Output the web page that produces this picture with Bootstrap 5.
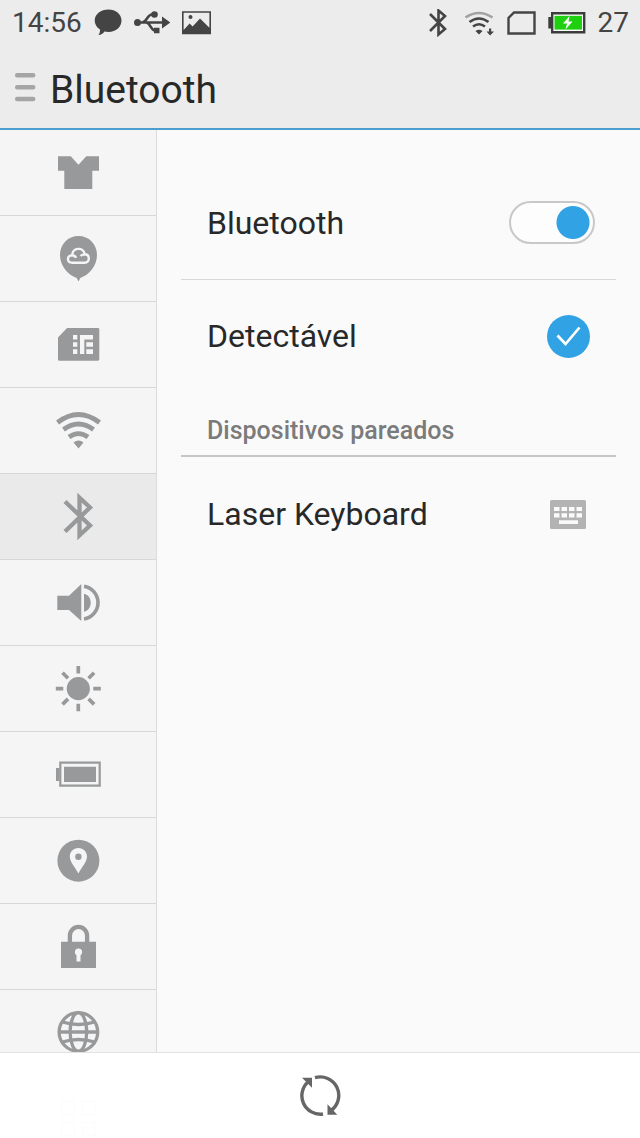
<!DOCTYPE html>
<html lang="pt-BR">
<head>
<meta charset="utf-8">
<meta name="viewport" content="width=device-width, initial-scale=1">
<title>Bluetooth</title>
<link href="https://cdn.jsdelivr.net/npm/bootstrap@5.3.0/dist/css/bootstrap.min.css" rel="stylesheet">
<style>
  body { font-family: Roboto, "Noto Sans", sans-serif; background: #fafafa; color: #282828; }
  svg { display: block; flex: none; }
  .top-area { background: #ececec; border-bottom: 2px solid #4a9fcf; }
  .status-bar { height: 46px; padding: 0 11px 0 12px; font-size: 28px; line-height: 46px; color: #444; }
  .status-group { gap: 12px; }
  .title-bar { height: 82px; padding: 2px 14px 0; gap: 14px; }
  .title-bar h1 { font-size: 39px; line-height: 46px; padding-top: 3px; }
  .side-nav { width: 157px; background: #f5f5f5; border-right: 1px solid #dcdcdc; }
  .side-nav a { height: 86px; border-bottom: 1px solid #d8d8d8; color: #98999a; }
  .side-nav a.active { background: #eaeaea; }
  .settings { padding: 36px 24px 0; }
  .setting-row { height: 114px; padding: 0 21px 0 26px; font-size: 32px; line-height: 40px; }
  .setting-row.short { height: 112px; }
  .ruled { border-bottom: 1px solid #d8d8d8; }
  .section-title { height: 65px; padding: 23px 26px 0; font-size: 25px; line-height: 32px; font-weight: 500; color: #7b7b7b; border-bottom: 2px solid #c6c6c6; }
  .trailing { width: 54px; }
  .toggle { appearance: none; width: 86px; height: 43px; margin: 0; border: 2px solid #c8c8c8; border-radius: 22px;
    background: #fdfdfd radial-gradient(circle at 20px 50%, #c8c8c8 16px, transparent 17px); }
  .toggle:checked { background-image: radial-gradient(circle at 62px 50%, #31a3e4 16px, transparent 17px); }
  .round-check { appearance: none; width: 43px; height: 43px; margin: 0; border: 2px solid #c8c8c8; border-radius: 50%; flex: none; }
  .round-check:checked { border: 0; background: #31a3e4 url("data:image/svg+xml,%3Csvg xmlns='http://www.w3.org/2000/svg' viewBox='0 0 43 43'%3E%3Cpath d='M10.500 20.500l8 8.500L32.500 12.500' fill='none' stroke='white' stroke-width='2.700'/%3E%3C/svg%3E") center / 43px; }
  .bottom-bar { height: 86px; background: rgba(255,255,255,.98); border-top: 1px solid #e2e2e2; }
</style>
</head>
<body>
<div class="vh-100 d-flex flex-column overflow-hidden">
  <header class="top-area flex-shrink-0">
    <div class="status-bar d-flex justify-content-between">
      <div class="status-group d-flex align-items-center">
        <span>14:56</span>
        <svg width="28" height="28" viewBox="0 0 28 28" fill="currentColor" aria-hidden="true"><path d="M14.500.5C21.500.5 27.500 5 27.500 11.500S22 23 14.500 23c-1.500 0-3-.2-4-.5C9 24.500 7 26 4.500 26c1-1.500 1.700-3.500 1.500-5.500C2.500 18.500.7 15 .7 11.500.7 5 7 .5 14.500.5z"/></svg>
        <svg width="36" height="28" viewBox="0 0 36 28" fill="none" stroke="currentColor" stroke-width="2.500" aria-hidden="true"><path d="M3 13.500h27M8 13.500c5 0 5-8 10-8h3M12 13.500c4 0 5 8 9 8h2"/><g fill="currentColor" stroke="none"><circle cx="3.500" cy="13.500" r="3.500"/><circle cx="20.500" cy="5.500" r="3.300"/><path d="M20 18.700h5.500v5.500H20zM28 7.500l8.500 6-8.500 6z"/></g></svg>
        <svg width="29" height="28" viewBox="0 0 29 28" fill="currentColor" aria-hidden="true"><path fill-rule="evenodd" d="M0 2.200h29v23H0zM1.600 3.800V21l6-6.500 3 3L18 9.500l9.400 9.200V3.800z"/><circle cx="8.500" cy="8" r="2"/></svg>
      </div>
      <div class="status-group d-flex align-items-center">
        <svg width="24" height="28" viewBox="0 0 24 28" fill="none" stroke="currentColor" stroke-width="2.600" aria-hidden="true"><path d="M1 5l15 15-6.500 5.500v-24L16 7 1 22"/></svg>
        <svg width="30" height="28" viewBox="0 0 30 28" fill="none" stroke="currentColor" stroke-width="2.600" aria-hidden="true"><path stroke="#a2a2a2" d="M.5 8.500Q14 -.500 27.500 8.500"/><path d="M4.500 13Q14 6 23.500 13M8 17.500q6-4.500 12 0"/><path fill="currentColor" stroke="none" d="M10.500 22q3.500-2.500 7 0L14 25.500zM24 19.500h2.200v3H29L25.100 26.500 21.500 22.500H24z"/></svg>
        <svg width="29" height="28" viewBox="0 0 29 28" fill="none" stroke="currentColor" stroke-width="2.400" aria-hidden="true"><path d="M7 3.500h20.500v21h-26V9z"/></svg>
        <svg width="38" height="28" viewBox="0 0 38 28" aria-hidden="true"><path d="M4.200 4.200h32v19h-32z" fill="#fff" stroke="#3c3c3c" stroke-width="2.400"/><path fill="#3c3c3c" d="M.3 8H4v11.500H.3z"/><path fill="#1fd011" d="M6.500 6.800h27.500v13.800H6.500z"/><path fill="#fff" d="M21.500 7l-6.500 7.500h4L17.500 20.500l7-8h-4z"/></svg>
        <span>27</span>
      </div>
    </div>
    <div class="title-bar d-flex align-items-center">
      <button type="button" class="btn p-0 border-0" aria-label="Menu">
        <svg width="22" height="32" viewBox="0 0 22 32" stroke="#a5a5a5" stroke-width="4.500" stroke-linecap="round"><path d="M3.200 3.300h16M3.200 15.300h16M3.200 27h16"/></svg>
      </button>
      <h1 class="m-0 fw-normal">Bluetooth</h1>
    </div>
  </header>

  <div class="d-flex flex-fill overflow-hidden">
    <nav class="side-nav flex-shrink-0" aria-label="Configurações">
      <a href="#tema" aria-label="Tema" class="d-flex align-items-center justify-content-center"><svg width="48" height="49" fill="currentColor"><path d="M4 8.300h12.700l7.800 8.400 7.800-8.400H45V22.700h-6.700V41h-28V22.700H4z"/></svg></a>
      <a href="#nuvem" aria-label="Nuvem" class="d-flex align-items-center justify-content-center"><svg width="48" height="49"><path fill="currentColor" d="M24.500 2C14 2 6 10 6 21c0 11 8 20 16.700 23l1.800 3.500 1.800-3.500C35 41 43 32 43 21 43 10 35 2 24.500 2z"/><path fill="none" stroke="#f5f5f5" stroke-width="2.400" d="M18.500 28.700c-6 0-6-7.500-.3-7.500 0-8 11.300-8.500 12.500-1 5.500.3 5.500 8.500 0 8.500zM18 21.200c2 0 3.500 1 4 2.700M30.700 20.200c-2 0-3.200.7-4 2"/></svg></a>
      <a href="#sim" aria-label="Cartão SIM" class="d-flex align-items-center justify-content-center"><svg width="48" height="49"><path fill="currentColor" d="M13 8h31a1.300 1.300 0 0 1 1.300 1.300v30A1.300 1.300 0 0 1 44 40.700H5.300A1.300 1.300 0 0 1 4 39.400V17.500z"/><path fill="#f5f5f5" d="M19 15h4.300v4.500H19zM19 22.300h4.300v4.400H19zM19 29.300h4.300V34H19zM26 15h13v4.500h-8.700V34H26zM32.300 22.300H39v4.400h-6.700zM32.300 29.300H39V34h-6.700z"/></svg></a>
      <a href="#wifi" aria-label="Wi-Fi" class="d-flex align-items-center justify-content-center"><svg width="48" height="49" fill="none" stroke="currentColor" stroke-width="4.800"><path d="M3.500 16.500Q24.500 .500 45.500 16.500M9.500 23.500Q24.500 12.500 39.500 23.500M15 31Q24.500 24.200 34 31"/><path fill="currentColor" stroke="none" d="M19.500 36.500q5-4 10 0l-5 6z"/></svg></a>
      <a href="#bluetooth" aria-label="Bluetooth" aria-current="page" class="active d-flex align-items-center justify-content-center"><svg width="48" height="49" fill="none" stroke="currentColor" stroke-width="4.300"><path d="M11 9.500l25 24-10.500 9.800V5.700L36 15.500l-25 24"/></svg></a>
      <a href="#som" aria-label="Som" class="d-flex align-items-center justify-content-center"><svg width="48" height="49" fill="currentColor"><path d="M3.300 17.700H15L27.300 6v37L15 32H3.300zM30 15.800c9 1.500 9 16.500 0 18z"/><path fill="none" stroke="currentColor" stroke-width="3.600" d="M30 8.200a16.600 16.600 0 0 1 0 32.800"/></svg></a>
      <a href="#brilho" aria-label="Brilho" class="d-flex align-items-center justify-content-center"><svg width="48" height="49" stroke="currentColor" stroke-width="3.700"><circle cx="24.300" cy="24.600" r="11.600" fill="currentColor" stroke="none"/><path d="M24.300 2v7.500M24.300 39.700v7.500M1.800 24.600h7.500M39.300 24.600h7.500M8.500 8.800l5.500 5.500M34.600 34.900l5.500 5.500M8.500 40.400l5.500-5.500M34.600 14.300l5.500-5.500"/></svg></a>
      <a href="#bateria" aria-label="Bateria" class="d-flex align-items-center justify-content-center"><svg width="48" height="49" fill="currentColor"><path d="M6.300 12.700h39.400v23H6.300z" fill="none" stroke="currentColor" stroke-width="2.200"/><path d="M10 16.700h32V32H10zM2 18h3.500v13H2z"/></svg></a>
      <a href="#local" aria-label="Localização" class="d-flex align-items-center justify-content-center"><svg width="48" height="49"><circle cx="24.400" cy="24.700" r="21" fill="currentColor"/><path fill="#f5f5f5" fill-rule="evenodd" d="M24.400 12c5 0 8.600 3.700 8.600 8.500 0 5.500-5 10-8.600 17-3.600-7-8.600-11.500-8.600-17 0-4.800 3.600-8.500 8.600-8.500zm0 5.500a3.200 3.200 0 1 0 0 6.400 3.200 3.200 0 0 0 0-6.400z"/></svg></a>
      <a href="#seguranca" aria-label="Segurança" class="d-flex align-items-center justify-content-center"><svg width="48" height="49"><path fill="currentColor" d="M7 19.700h35V46H7z"/><path fill="none" stroke="currentColor" stroke-width="4.300" d="M15.900 20v-6.500a8.600 8.600 0 0 1 17.200 0V20"/><circle cx="24.500" cy="30" r="3.600" fill="#f5f5f5"/><path fill="#f5f5f5" d="M22.500 31h4v8.500h-4z"/></svg></a>
      <a href="#idioma" aria-label="Idioma" class="d-flex align-items-center justify-content-center"><svg width="48" height="49" fill="none" stroke="currentColor" stroke-width="3.300"><circle cx="24.400" cy="24" r="19.300"/><ellipse cx="24.400" cy="24" rx="8.300" ry="19.300"/><path d="M5 24h39M8.500 14q16 5 32 0M8.500 34q16-5 32 0"/></svg></a>
      <a href="#apps" aria-label="Aplicativos" class="d-flex align-items-center justify-content-center"><svg width="48" height="49" fill="none" stroke="currentColor" stroke-width="2.500"><path d="M7.500 7.500h13v13h-13zM28.500 7.500h13v13h-13zM7.500 28.500h13v13h-13zM28.500 28.500h13v13h-13z"/></svg></a>
    </nav>

    <main class="settings flex-fill">
      <div class="setting-row ruled d-flex align-items-center justify-content-between">
        <label for="bt-on">Bluetooth</label>
        <input id="bt-on" class="toggle" type="checkbox" role="switch" checked>
      </div>
      <div class="setting-row short d-flex align-items-center justify-content-between">
        <label for="bt-visible">Detectável</label>
        <span class="trailing d-flex justify-content-center"><input id="bt-visible" class="round-check" type="checkbox" checked></span>
      </div>
      <h2 class="section-title m-0">Dispositivos pareados</h2>
      <div class="setting-row d-flex align-items-center justify-content-between">
        <span>Laser Keyboard</span>
        <span class="trailing d-flex justify-content-center">
          <svg width="36" height="29" viewBox="0 0 36 29" aria-hidden="true"><rect width="36" height="29" rx="1.500" fill="#b3b3b3"/><path fill="#fafafa" d="M4 7h5.500v4H4zM11.500 7H17v4h-5.500zM19 7h5.500v4H19zM26.500 7H32v4h-5.500zM4 13.300h5.500v4.200H4zM11.500 13.300H17v4.200h-5.500zM19 13.300h5.500v4.200H19zM26.500 13.300H32v4.200h-5.500zM9 20.300h19v3.700H9z"/></svg>
        </span>
      </div>
    </main>
  </div>

  <footer class="bottom-bar fixed-bottom d-flex align-items-center justify-content-center">
    <button type="button" class="btn p-0 border-0" aria-label="Atualizar">
      <svg width="44" height="44" viewBox="0 0 44 44" fill="none" stroke="#666" stroke-width="3.400"><path d="M17 3.700A18.500 18.500 0 0 1 33 36.500M25 40A18.500 18.500 0 0 1 10.500 7.500"/><path fill="#666" stroke="none" d="M4 3.700h10v10zM29.500 30.300v10.400H39.300z"/></svg>
    </button>
  </footer>
</div>
<script src="https://cdn.jsdelivr.net/npm/bootstrap@5.3.0/dist/js/bootstrap.bundle.min.js"></script>
</body>
</html>
